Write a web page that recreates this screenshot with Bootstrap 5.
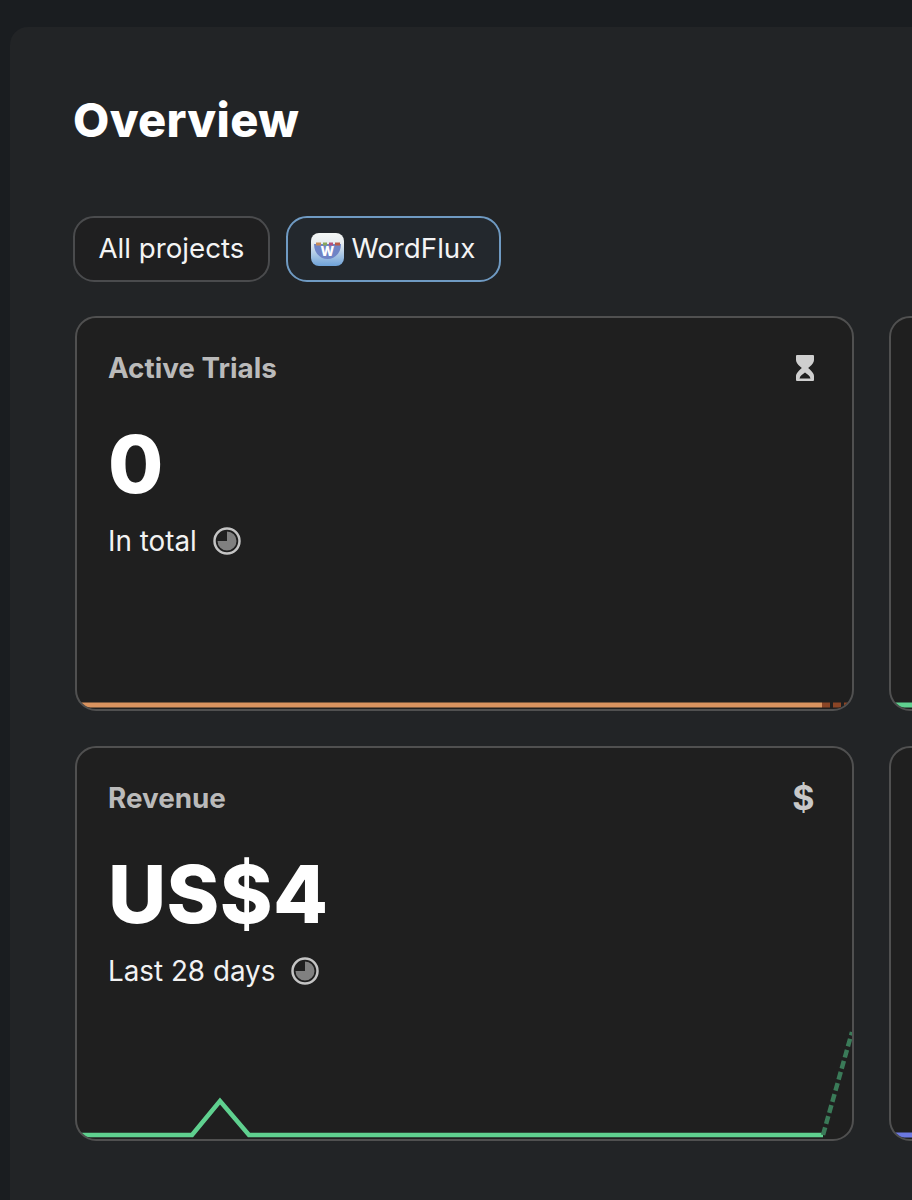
<!DOCTYPE html>
<html lang="en">
<head>
<meta charset="utf-8">
<title>Overview</title>
<link href="https://cdn.jsdelivr.net/npm/bootstrap@5.3.0/dist/css/bootstrap.min.css" rel="stylesheet">
<style>
html, body { height: 1200px; overflow: hidden; }
body { background: #1a1d20; font-family: Inter, "Liberation Sans", sans-serif; color: #fff; }
.shell { margin: 27px -40px 0 10px; height: 1173px; background: #222426; border-radius: 18px 18px 0 0; padding: 69px 0 0 63px; overflow: hidden; }
.page-title { font-family: Inter, sans-serif; font-size: 47px; font-weight: 800; line-height: 48px; letter-spacing: .3px; margin: 0 0 72px; color: #fff; }
.pill-row { gap: 16px; margin-bottom: 34px; }
.pill-btn { height: 66px; border-radius: 21px; border: 2px solid #4a4b4d; background: #1f1f20; color: #f4f4f4; font-size: 27.7px; line-height: 1; padding: 0 23.5px; display: flex; align-items: center; gap: 7px; }
.pill-btn:hover { color: #f4f4f4; background: #1f1f20; border-color: #4a4b4d; }
.pill-active, .pill-active:hover { border-color: #6f9ac2; background: #23282d; }
.app-logo { width: 33px; height: 33px; display: block; }
.metric-grid { display: grid; grid-template-columns: 779px 779px; gap: 35px; margin-left: 1.500px; width: 1700px; }
.metric { height: 395px; background: #1f1f1f; border: 2px solid #505050; border-radius: 21px; overflow: hidden; display: flex; flex-direction: column; padding: 0; }
.metric-body { padding: 32px 37px 0 31.500px; flex: 0 0 auto; }
.metric-head { display: flex; justify-content: space-between; align-items: center; height: 36px; }
.metric-label { font-size: 27.8px; font-weight: 700; color: #bababa; line-height: 36px; }
.metric-value { font-size: 80px; font-weight: 800; line-height: 80px; margin-top: 38px; color: #fff; letter-spacing: .4px; }
.metric-note { font-size: 27.8px; line-height: 34px; color: #f2f2f2; margin-top: 20px; display: flex; align-items: center; gap: 16px; }
.metric-chart { display: block; margin-top: auto; width: 775px; flex: 0 0 auto; }
.head-ico { display: block; }
.dollar-ico { font-size: 34px; font-weight: 700; color: #c8c8c8; line-height: 36px; }
</style>
</head>
<body>
<div class="shell">
  <h1 class="page-title">Overview</h1>
  <div class="d-flex pill-row">
    <button type="button" class="btn pill-btn">All projects</button>
    <button type="button" class="btn pill-btn pill-active">
      <svg class="app-logo" viewBox="0 0 33 33" aria-hidden="true">
        <defs><linearGradient id="lg" x1="0" y1="0" x2="0" y2="1"><stop offset="0" stop-color="#f4f7f5"/><stop offset=".3" stop-color="#e8edf0"/><stop offset="1" stop-color="#6ea2d8"/></linearGradient></defs>
        <rect width="33" height="33" rx="8" fill="url(#lg)"/>
        <path d="M3 11h27c0 9-6 15-13.500 15S3 20 3 11z" fill="#6e84c6"/>
        <rect x="5" y="9.500" width="5" height="3" fill="#c58a5a"/><rect x="12" y="9.500" width="4" height="3" fill="#88a85c"/><rect x="18" y="9.500" width="4" height="3" fill="#b5507c"/><rect x="24" y="9.500" width="5" height="3" fill="#b85a48"/>
        <text x="16.500" y="23" text-anchor="middle" font-family="Inter, sans-serif" font-size="13" font-weight="800" fill="#fff">W</text>
      </svg>
      WordFlux
    </button>
  </div>
  <div class="metric-grid">
    <div class="metric">
      <div class="metric-body">
        <div class="metric-head">
          <div class="metric-label">Active Trials</div>
          <svg class="head-ico" width="20" height="28" viewBox="0 0 20 28" aria-hidden="true"><path d="M2 2h16v4c0 3.500-4.500 6-6 8 1.500 2 6 4.500 6 8v4H2v-4c0-3.500 4.500-6 6-8-1.500-2-6-4.500-6-8z" fill="#cfcfcf" stroke="#cfcfcf" stroke-width="2" stroke-linejoin="round"/><path d="M4.500 24.500c.5-3 3.500-4.500 5.500-6 2 1.500 5 3 5.500 6z" fill="#1f1f1f"/></svg>
        </div>
        <div class="metric-value">0</div>
        <div class="metric-note">In total
          <svg width="28" height="28" viewBox="0 0 28 28" aria-hidden="true"><circle cx="14" cy="14" r="12.500" fill="none" stroke="#c4c4c4" stroke-width="2.500"/><path d="M14 4.500a9.500 9.500 0 1 1-9.500 9.500H14z" fill="#808080"/></svg>
        </div>
      </div>
      <svg class="metric-chart" height="8" viewBox="0 0 775 8" aria-hidden="true">
        <path d="M0 4H745" stroke="#d9935f" stroke-width="5" fill="none"/>
        <path d="M745 4H771" stroke="#8a4526" stroke-width="5" stroke-dasharray="8 3" fill="none"/>
      </svg>
    </div>
    <div class="metric">
      <div class="metric-body"></div>
      <svg class="metric-chart" height="8" viewBox="0 0 775 8" aria-hidden="true"><path d="M0 4H775" stroke="#5fd08f" stroke-width="5" fill="none"/></svg>
    </div>
    <div class="metric">
      <div class="metric-body">
        <div class="metric-head">
          <div class="metric-label">Revenue</div>
          <span class="head-ico dollar-ico">$</span>
        </div>
        <div class="metric-value">US$4</div>
        <div class="metric-note">Last 28 days
          <svg width="28" height="28" viewBox="0 0 28 28" aria-hidden="true"><circle cx="14" cy="14" r="12.500" fill="none" stroke="#c4c4c4" stroke-width="2.500"/><path d="M14 4.500a9.500 9.500 0 1 1-9.500 9.500H14z" fill="#808080"/></svg>
        </div>
      </div>
      <svg class="metric-chart" height="112" viewBox="0 0 775 112" aria-hidden="true">
        <path d="M0 108H115L143 74 172 108H746" stroke="#5fd08f" stroke-width="4.500" stroke-linejoin="miter" fill="none"/>
        <path d="M746 108L775 5" stroke="#3a7a58" stroke-width="4.500" stroke-dasharray="8 3.500" fill="none"/>
      </svg>
    </div>
    <div class="metric">
      <div class="metric-body"></div>
      <svg class="metric-chart" height="8" viewBox="0 0 775 8" aria-hidden="true"><path d="M0 4H775" stroke="#6b78e0" stroke-width="5" fill="none"/></svg>
    </div>
  </div>
</div>
</body>
</html>
